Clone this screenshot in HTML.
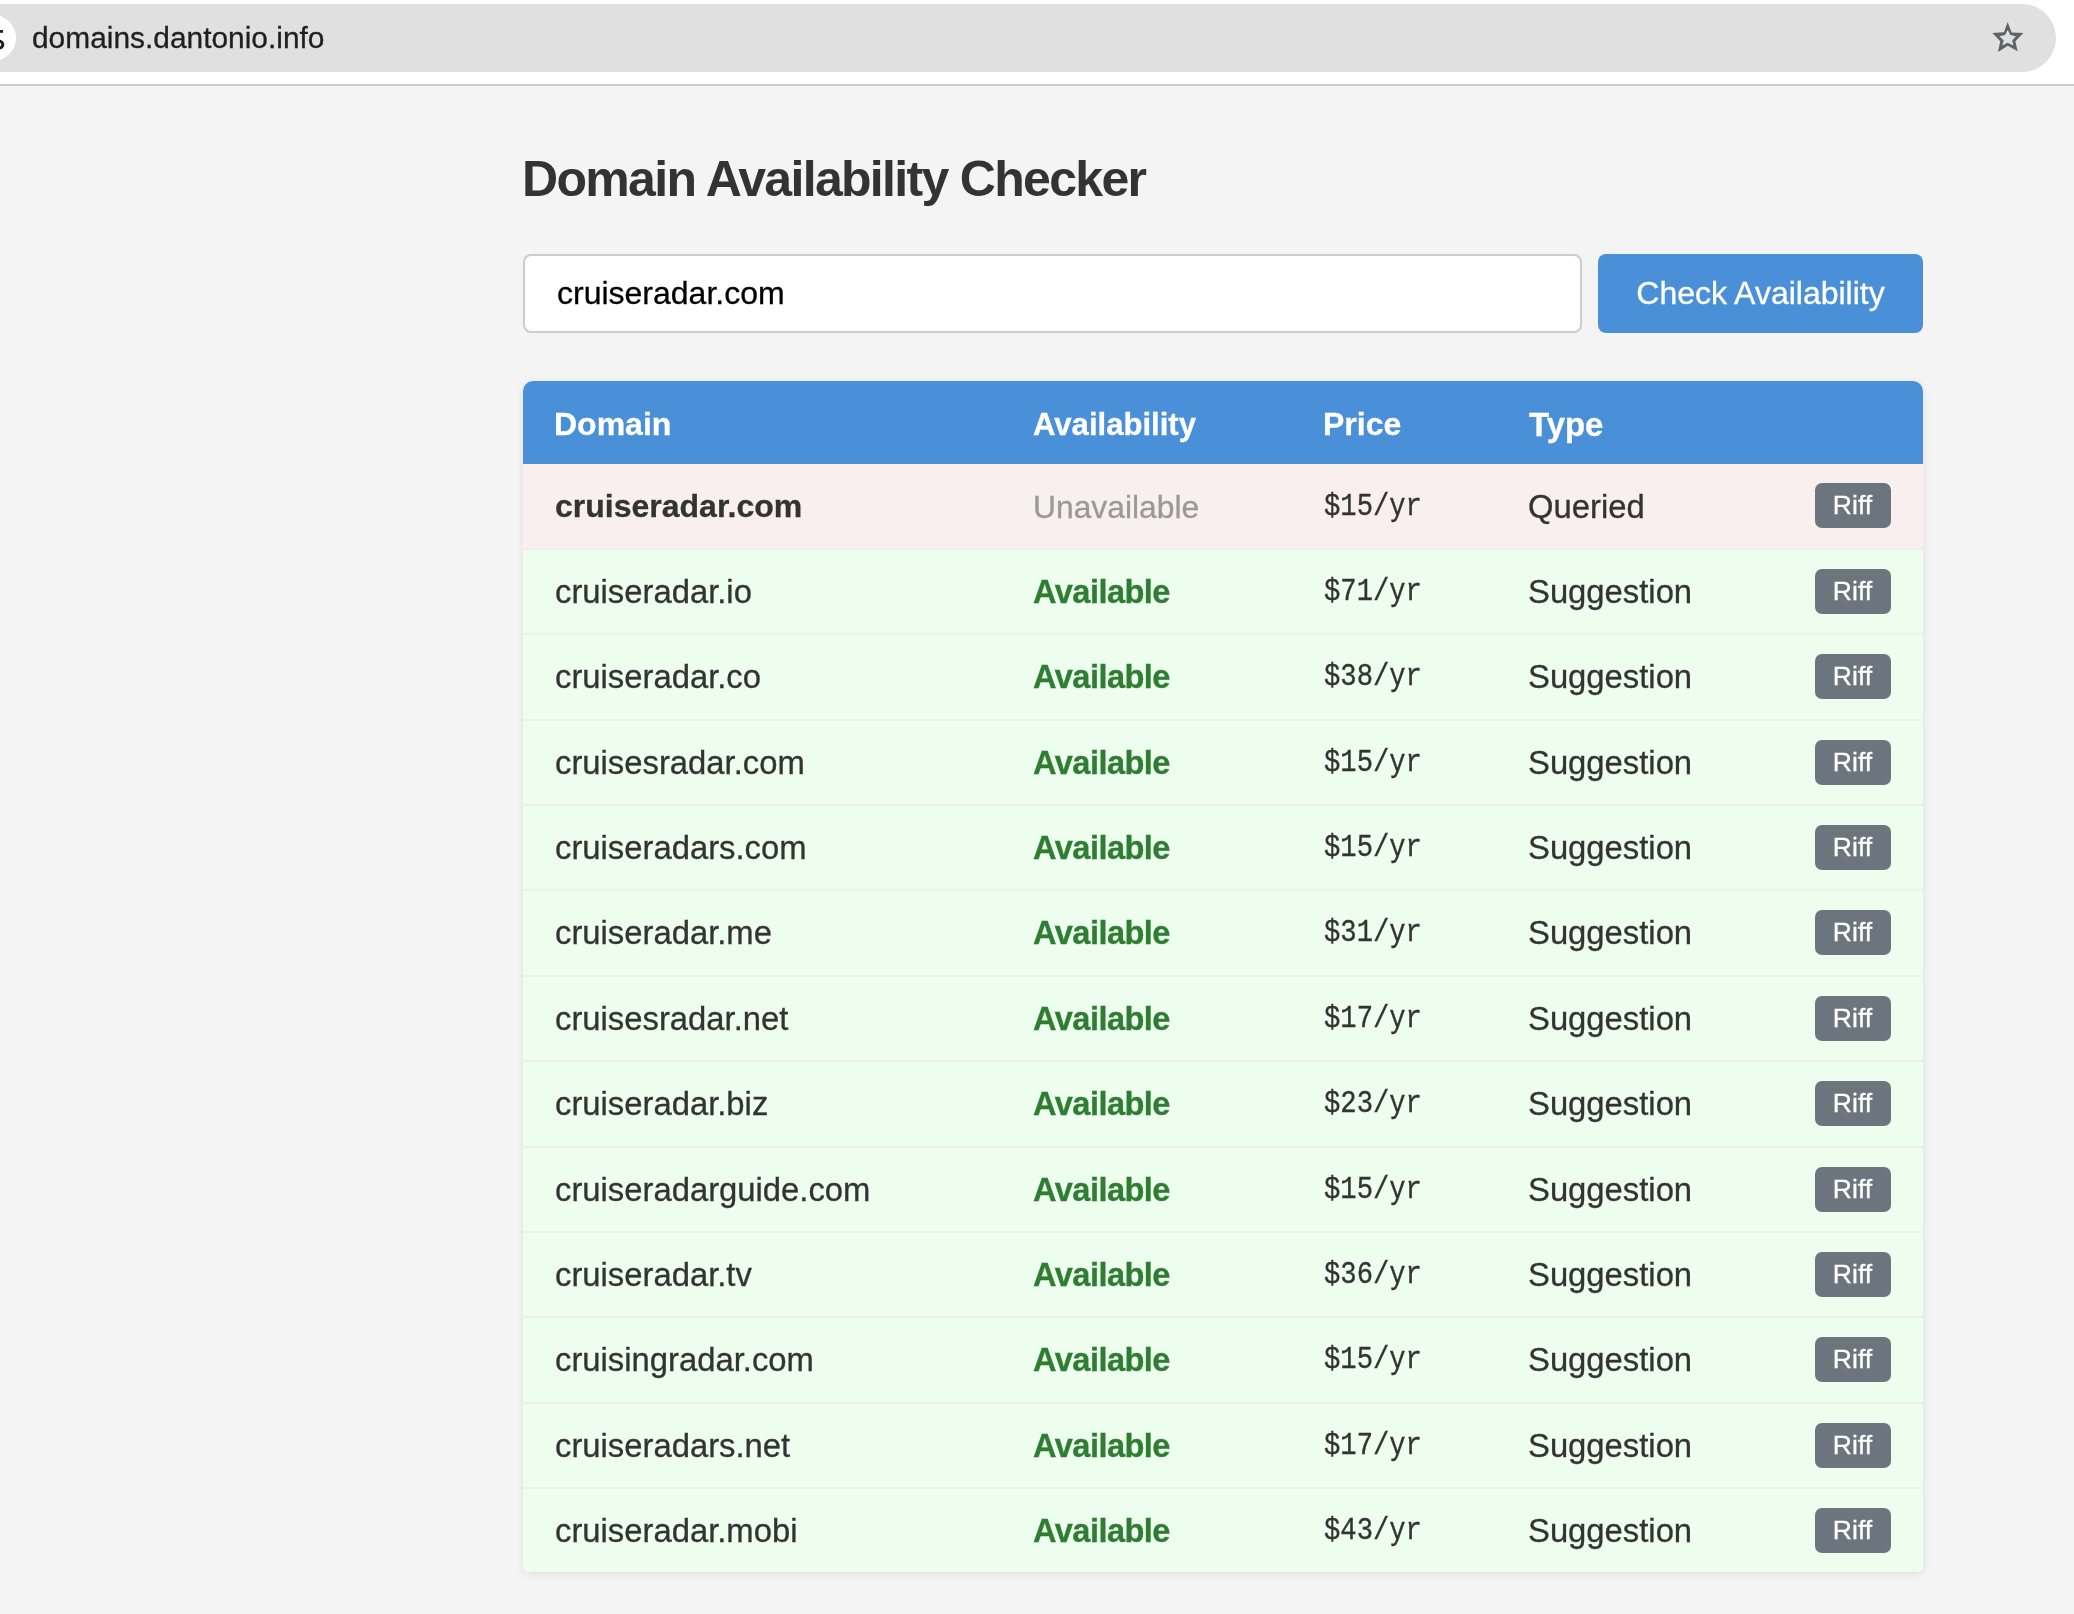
<!DOCTYPE html>
<html><head><meta charset="utf-8"><title>Domain Availability Checker</title>
<style>
*{box-sizing:border-box;margin:0;padding:0}
html,body{width:2074px;height:1614px;overflow:hidden}
body{-webkit-font-smoothing:antialiased;background:#f4f4f4;font-family:"Liberation Sans",sans-serif;position:relative;color:#333}
.chrome{position:absolute;left:0;top:0;width:2074px;height:86px;background:#fff;border-bottom:2px solid #c8cbca}
.url{position:absolute;left:-60px;top:4px;width:2116px;height:68px;border-radius:34px;background:#e0e0e0}
.ico{position:absolute;left:0;top:0}
.circ{position:absolute;left:-30.5px;top:14.5px;width:46.5px;height:46.5px;border-radius:50%;background:#fff}
.urltext{position:absolute;left:32px;top:4px;line-height:68px;font-size:29.9px;color:#1f1f1f;white-space:nowrap}
.star{position:absolute;left:1984px;top:14px}
h1{position:absolute;left:522px;top:151px;font-size:50px;letter-spacing:-1.68px;font-weight:700;line-height:56px;color:#333;white-space:nowrap}
.inp{position:absolute;left:523px;top:254px;width:1059px;height:79px;border:2px solid #ccc;border-radius:8px;background:#fff;font-size:32px;line-height:75px;padding-left:32px;color:#000}
.btn{position:absolute;left:1598px;top:254px;width:325px;height:79px;border-radius:8px;background:#4a90d9;color:#fff;font-size:32px;line-height:79px;text-align:center}
.tbl{position:absolute;left:523px;top:381px;width:1400px;border-radius:10px 10px 6px 6px;overflow:hidden;box-shadow:0 2px 8px rgba(0,0,0,0.09);background:#fff}
.head{position:relative;height:83px;background:#4a90d9;color:#fff;font-weight:700}
.row{position:relative;height:85.36px;border-bottom:2px solid #eee}
.row.q{height:86px}
.row.last{height:83.36px;border-bottom:0}
.q{background:#f9efee}
.s{background:#edfdee}
.c{position:absolute;top:1px;font-size:32.8px;line-height:83px;white-space:nowrap}
.dom{left:31.5px}
.av{left:510px}
.pr{left:801px;font-family:"Liberation Mono",monospace;font-size:27.2px;transform:scaleY(1.14);transform-origin:0 50.5px}
.ty{left:1005px}
.head .c{top:1.5px;font-size:32px}
.head .dom{left:31px}
.head .av{font-size:31.1px}
.head .pr{font-family:"Liberation Sans",sans-serif;font-size:32px;left:800px;transform:none}
.head .ty{font-size:32.9px;left:1006px}
.q .dom{font-weight:700;font-size:32px}
.u{color:#999;font-size:31.8px;top:2px}
.g{color:#2e7d32;font-weight:700;font-size:32.6px;letter-spacing:-0.55px;top:0}
.riff{position:absolute;left:1292px;top:19px;width:76px;height:45px;border-radius:7px;background:#6c757d;color:#fff;font-size:26.5px;line-height:45px;text-align:center;text-indent:-1px}

.s .dom,.s .ty{top:0}
.q .ty{top:1px}
.q .pr{top:2px}

h1,.urltext,.inp,.btn,.c,.riff{will-change:transform}
.inp,.btn,.riff,.c,.urltext{-webkit-text-stroke:0.3px currentColor}

</style></head>
<body>
<div class="chrome">
  <div class="url"></div>
  <div class="circ"></div>
  <svg class="ico" width="30" height="66" viewBox="0 0 30 66"><rect x="-10" y="30" width="13" height="2.8" fill="#1f1f1f"/><circle cx="-0.6" cy="44.6" r="3.4" fill="none" stroke="#1f1f1f" stroke-width="3"/></svg>
  <span class="urltext">domains.dantonio.info</span>
  <svg class="star" width="48" height="46" viewBox="1984 14 48 46"><path fill="#5f6368" fill-rule="evenodd" d="M2007.66 21.98 L2011.65 32.53 L2023.34 33.1 L2015.36 41.37 L2017.64 51.34 L2007.8 45.64 L1997.97 51.9 L2000.25 41.37 L1992.27 33.1 L2003.95 32.24 Z M2007.66 29.96 L2010.5 35.1 L2015.9 36.2 L2012.2 40.5 L2013.4 45.6 L2007.66 42.8 L2002.2 45.6 L2003.7 40.5 L1999.4 36.2 L2005.1 35.1 Z"/></svg>
</div>
<h1>Domain Availability Checker</h1>
<div class="inp">cruiseradar.com</div>
<div class="btn">Check Availability</div>
<div class="tbl">
  <div class="head"><span class="c dom">Domain</span><span class="c av">Availability</span><span class="c pr">Price</span><span class="c ty">Type</span></div>
  <div class="row q"><span class="c dom">cruiseradar.com</span><span class="c av u">Unavailable</span><span class="c pr">$15/yr</span><span class="c ty">Queried</span><span class="riff">Riff</span></div><div class="row s"><span class="c dom">cruiseradar.io</span><span class="c av g">Available</span><span class="c pr">$71/yr</span><span class="c ty">Suggestion</span><span class="riff">Riff</span></div><div class="row s"><span class="c dom">cruiseradar.co</span><span class="c av g">Available</span><span class="c pr">$38/yr</span><span class="c ty">Suggestion</span><span class="riff">Riff</span></div><div class="row s"><span class="c dom">cruisesradar.com</span><span class="c av g">Available</span><span class="c pr">$15/yr</span><span class="c ty">Suggestion</span><span class="riff">Riff</span></div><div class="row s"><span class="c dom">cruiseradars.com</span><span class="c av g">Available</span><span class="c pr">$15/yr</span><span class="c ty">Suggestion</span><span class="riff">Riff</span></div><div class="row s"><span class="c dom">cruiseradar.me</span><span class="c av g">Available</span><span class="c pr">$31/yr</span><span class="c ty">Suggestion</span><span class="riff">Riff</span></div><div class="row s"><span class="c dom">cruisesradar.net</span><span class="c av g">Available</span><span class="c pr">$17/yr</span><span class="c ty">Suggestion</span><span class="riff">Riff</span></div><div class="row s"><span class="c dom">cruiseradar.biz</span><span class="c av g">Available</span><span class="c pr">$23/yr</span><span class="c ty">Suggestion</span><span class="riff">Riff</span></div><div class="row s"><span class="c dom">cruiseradarguide.com</span><span class="c av g">Available</span><span class="c pr">$15/yr</span><span class="c ty">Suggestion</span><span class="riff">Riff</span></div><div class="row s"><span class="c dom">cruiseradar.tv</span><span class="c av g">Available</span><span class="c pr">$36/yr</span><span class="c ty">Suggestion</span><span class="riff">Riff</span></div><div class="row s"><span class="c dom">cruisingradar.com</span><span class="c av g">Available</span><span class="c pr">$15/yr</span><span class="c ty">Suggestion</span><span class="riff">Riff</span></div><div class="row s"><span class="c dom">cruiseradars.net</span><span class="c av g">Available</span><span class="c pr">$17/yr</span><span class="c ty">Suggestion</span><span class="riff">Riff</span></div><div class="row s last"><span class="c dom">cruiseradar.mobi</span><span class="c av g">Available</span><span class="c pr">$43/yr</span><span class="c ty">Suggestion</span><span class="riff">Riff</span></div>
</div>
</body></html>
